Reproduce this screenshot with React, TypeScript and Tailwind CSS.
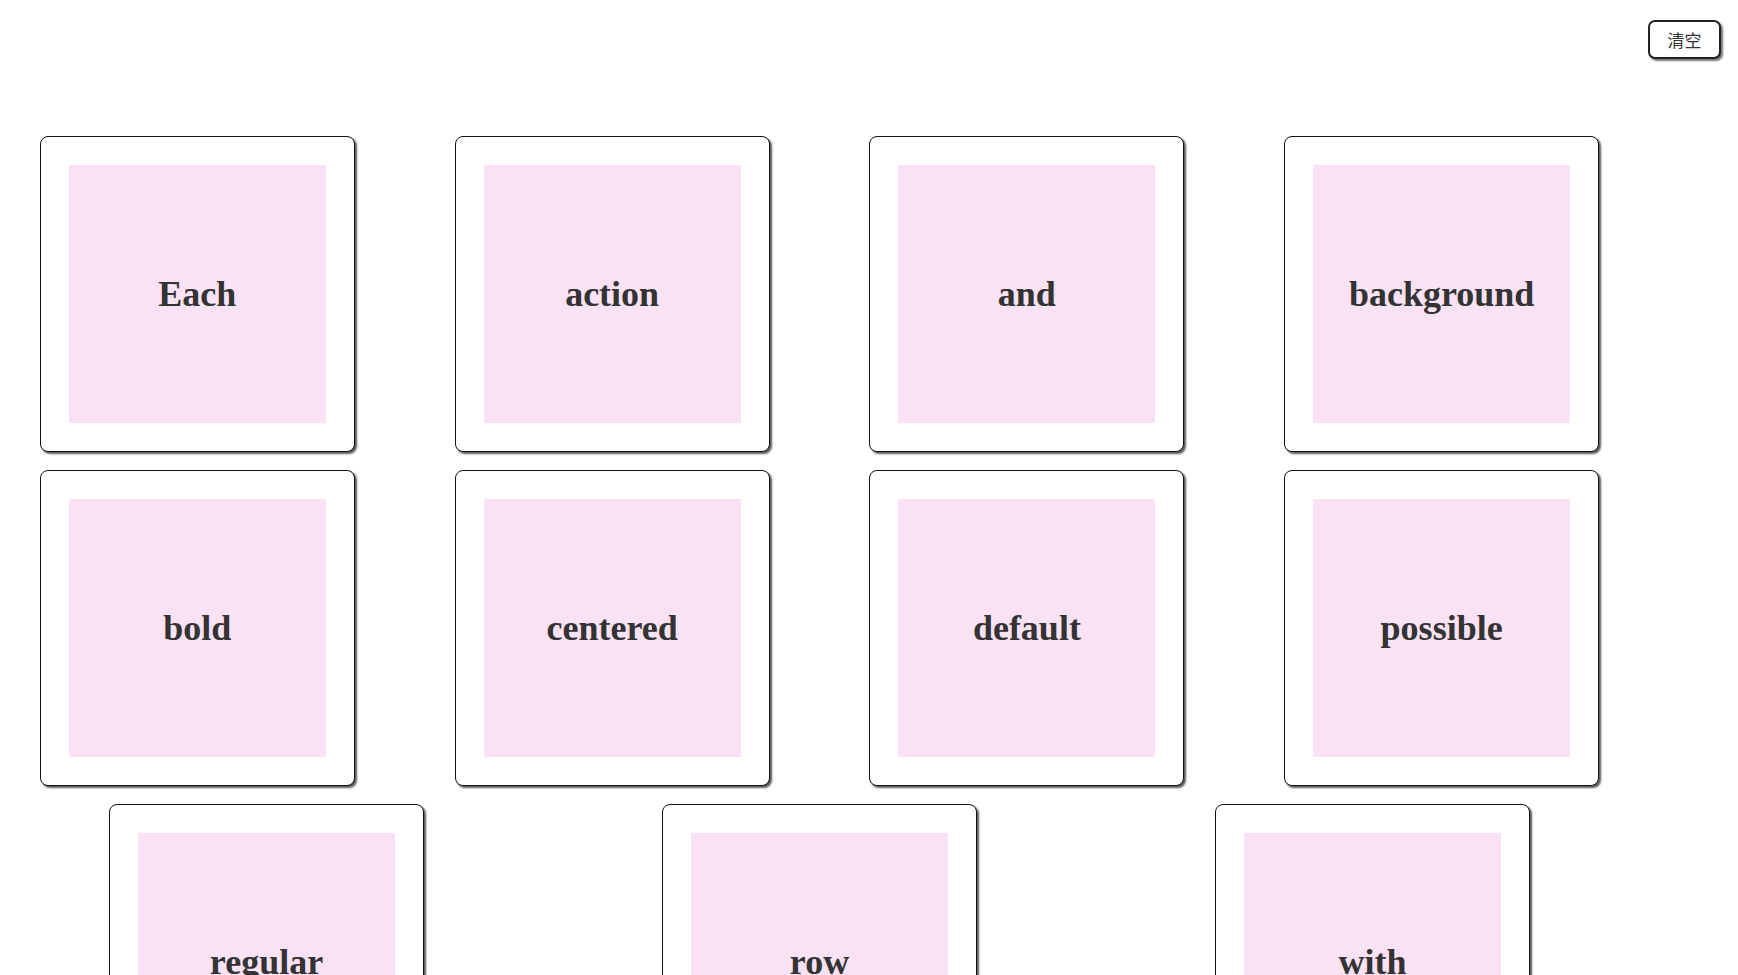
import React from "react";

const words = [
  "Each",
  "action",
  "and",
  "background",
  "bold",
  "centered",
  "default",
  "possible",
  "regular",
  "row",
  "with",
];

export default function App() {
  return (
    <div className="min-h-screen bg-white">
      <div className="flex justify-end pt-[20px] pr-[17px]">
        <button
          className="w-[73px] h-[39px] border-2 border-[#222] rounded-[7px] bg-white text-[17px] text-[#333] flex items-center justify-center shadow-[2px_2px_2px_rgba(0,0,0,0.55)]"
          style={{ fontFamily: '"Noto Sans CJK SC", "Noto Sans", sans-serif' }}
        >
          清空
        </button>
      </div>
      <div className="mt-[68px] ml-[-10px] w-[1659px] flex flex-wrap justify-around">
        {words.map((w) => (
          <div
            key={w}
            className="my-[9px] mx-[40px] w-[315px] h-[316px] border border-[#111] rounded-[8px] bg-white p-[28px] shadow-[2px_2px_2px_rgba(0,0,0,0.65)]"
          >
            <div
              className="w-full h-full bg-[#f9e2f4] flex items-center justify-center text-[36px] font-bold text-[#333]"
              style={{ fontFamily: '"Liberation Serif", "Times New Roman", serif' }}
            >
              {w}
            </div>
          </div>
        ))}
      </div>
    </div>
  );
}
